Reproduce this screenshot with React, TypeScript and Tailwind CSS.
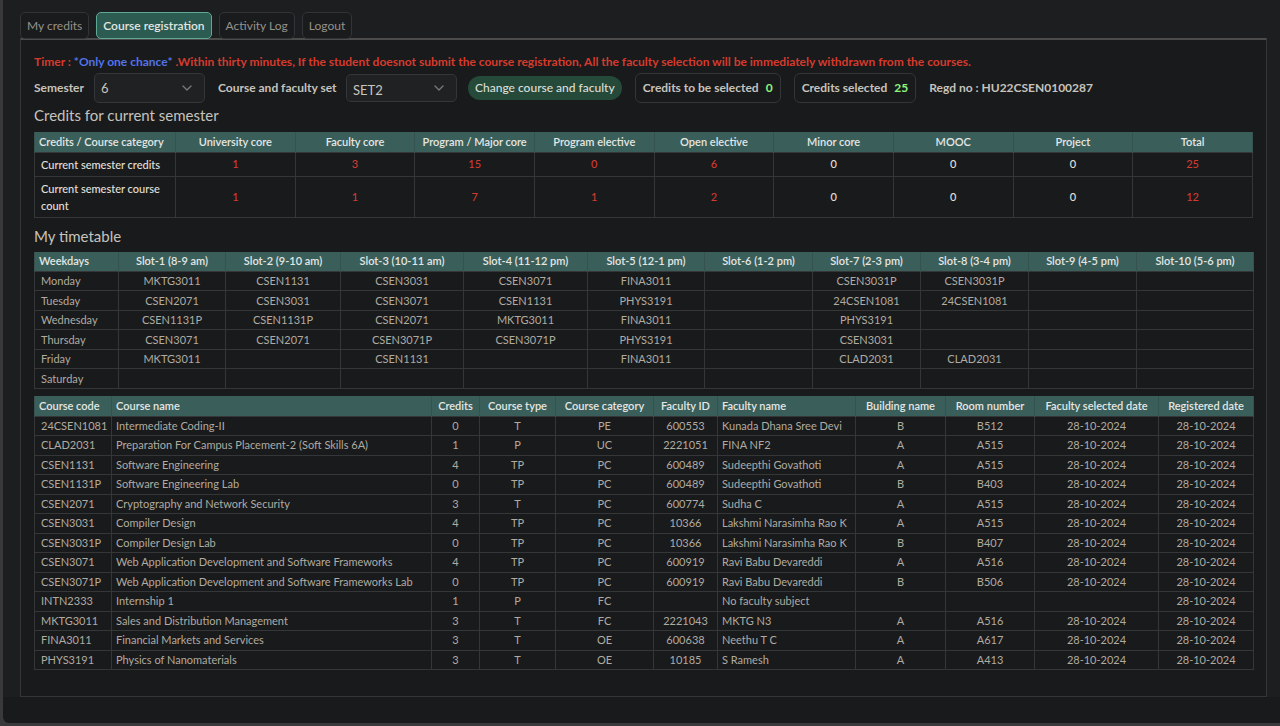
import { useState } from "react";
import type { ReactNode } from "react";
import { ChevronDown } from "lucide-react";

type Align = "left" | "center";

const tabs = ["My credits", "Course registration", "Activity Log", "Logout"];

const creditColumns = [
  "University core",
  "Faculty core",
  "Program / Major core",
  "Program elective",
  "Open elective",
  "Minor core",
  "MOOC",
  "Project",
  "Total",
];

const creditRows = [
  { label: "Current semester credits", height: "h-6", values: [1, 3, 15, 0, 6, 0, 0, 0, 25] },
  { label: "Current semester course count", height: "h-[41px]", values: [1, 1, 7, 1, 2, 0, 0, 0, 12] },
];

const slots = [
  { name: "Weekdays", width: "w-[84px]" },
  { name: "Slot-1 (8-9 am)", width: "w-[107px]" },
  { name: "Slot-2 (9-10 am)", width: "w-[115px]" },
  { name: "Slot-3 (10-11 am)", width: "w-[123px]" },
  { name: "Slot-4 (11-12 pm)", width: "w-[124px]" },
  { name: "Slot-5 (12-1 pm)", width: "w-[117px]" },
  { name: "Slot-6 (1-2 pm)", width: "w-[108px]" },
  { name: "Slot-7 (2-3 pm)", width: "w-[108px]" },
  { name: "Slot-8 (3-4 pm)", width: "w-[108px]" },
  { name: "Slot-9 (4-5 pm)", width: "w-[108px]" },
  { name: "Slot-10 (5-6 pm)", width: "w-[117px]" },
];

const timetable = [
  ["Monday", "MKTG3011", "CSEN1131", "CSEN3031", "CSEN3071", "FINA3011", "", "CSEN3031P", "CSEN3031P", "", ""],
  ["Tuesday", "CSEN2071", "CSEN3031", "CSEN3071", "CSEN1131", "PHYS3191", "", "24CSEN1081", "24CSEN1081", "", ""],
  ["Wednesday", "CSEN1131P", "CSEN1131P", "CSEN2071", "MKTG3011", "FINA3011", "", "PHYS3191", "", "", ""],
  ["Thursday", "CSEN3071", "CSEN2071", "CSEN3071P", "CSEN3071P", "PHYS3191", "", "CSEN3031", "", "", ""],
  ["Friday", "MKTG3011", "", "CSEN1131", "", "FINA3011", "", "CLAD2031", "CLAD2031", "", ""],
  ["Saturday", "", "", "", "", "", "", "", "", "", ""],
];

const courseColumns: { name: string; width: string; align: Align }[] = [
  { name: "Course code", width: "w-[77px]", align: "left" },
  { name: "Course name", width: "w-[320px]", align: "left" },
  { name: "Credits", width: "w-[48px]", align: "center" },
  { name: "Course type", width: "w-[76px]", align: "center" },
  { name: "Course category", width: "w-[98px]", align: "center" },
  { name: "Faculty ID", width: "w-[64px]", align: "center" },
  { name: "Faculty name", width: "w-[138px]", align: "left" },
  { name: "Building name", width: "w-[90px]", align: "center" },
  { name: "Room number", width: "w-[89px]", align: "center" },
  { name: "Faculty selected date", width: "w-[124px]", align: "center" },
  { name: "Registered date", width: "w-[95px]", align: "center" },
];

const date = "28-10-2024";

const courses = [
  ["24CSEN1081", "Intermediate Coding-II", "0", "T", "PE", "600553", "Kunada Dhana Sree Devi", "B", "B512", date, date],
  ["CLAD2031", "Preparation For Campus Placement-2 (Soft Skills 6A)", "1", "P", "UC", "2221051", "FINA NF2", "A", "A515", date, date],
  ["CSEN1131", "Software Engineering", "4", "TP", "PC", "600489", "Sudeepthi Govathoti", "A", "A515", date, date],
  ["CSEN1131P", "Software Engineering Lab", "0", "TP", "PC", "600489", "Sudeepthi Govathoti", "B", "B403", date, date],
  ["CSEN2071", "Cryptography and Network Security", "3", "T", "PC", "600774", "Sudha C", "A", "A515", date, date],
  ["CSEN3031", "Compiler Design", "4", "TP", "PC", "10366", "Lakshmi Narasimha Rao K", "A", "A515", date, date],
  ["CSEN3031P", "Compiler Design Lab", "0", "TP", "PC", "10366", "Lakshmi Narasimha Rao K", "B", "B407", date, date],
  ["CSEN3071", "Web Application Development and Software Frameworks", "4", "TP", "PC", "600919", "Ravi Babu Devareddi", "A", "A516", date, date],
  ["CSEN3071P", "Web Application Development and Software Frameworks Lab", "0", "TP", "PC", "600919", "Ravi Babu Devareddi", "B", "B506", date, date],
  ["INTN2333", "Internship 1", "1", "P", "FC", "", "No faculty subject", "", "", "", date],
  ["MKTG3011", "Sales and Distribution Management", "3", "T", "FC", "2221043", "MKTG N3", "A", "A516", date, date],
  ["FINA3011", "Financial Markets and Services", "3", "T", "OE", "600638", "Neethu T C", "A", "A617", date, date],
  ["PHYS3191", "Physics of Nanomaterials", "3", "T", "OE", "10185", "S Ramesh", "A", "A413", date, date],
];

function HeadCell({ children, width = "", align = "center" }: { children: ReactNode; width?: string; align?: Align }) {
  return (
    <th
      scope="col"
      className={`border-x border-[#35524f] p-0 px-1 text-[11px] leading-4 font-semibold whitespace-nowrap text-[#e4e6e3] ${
        align === "left" ? "text-left" : "text-center"
      } ${width}`}
    >
      {children}
    </th>
  );
}

function Cell({ children, align = "center", inset = "px-1" }: { children: ReactNode; align?: Align; inset?: string }) {
  return (
    <td
      className={`border border-[#343638] py-0 text-[11px] leading-4 whitespace-nowrap text-[#b0aba1] ${inset} ${
        align === "left" ? "text-left" : "text-center"
      }`}
    >
      {children}
    </td>
  );
}

function SelectBox({ id, options, size }: { id: string; options: string[]; size: string }) {
  return (
    <span className="relative w-[111px] shrink-0">
      <select
        id={id}
        className={`block w-full appearance-none rounded-[5px] border border-[#34373a] bg-[#1f2123] px-1.5 text-[13px] font-normal text-[#c9c5be] outline-none ${size}`}
      >
        {options.map((o) => (
          <option key={o}>{o}</option>
        ))}
      </select>
      <ChevronDown
        aria-hidden
        size={16}
        strokeWidth={2}
        className="pointer-events-none absolute top-1/2 right-2.5 -translate-y-1/2 text-[#77787a]"
      />
    </span>
  );
}

function Counter({ label, value }: { label: string; value: number }) {
  return (
    <div className="flex h-[30px] shrink-0 items-center gap-[7px] rounded-md border border-[#333538] px-[7px]">
      <span>{label}</span>
      <span className="text-[#8df57a]">{value}</span>
    </div>
  );
}

export default function App() {
  const [active, setActive] = useState("Course registration");

  return (
    <div className="flex min-h-screen flex-col bg-[#39393b] pb-[3px] pl-[3px] font-['Lato',sans-serif]">
      <div className="flex flex-1 flex-col rounded-bl-md bg-[#191a1c]">
        <main className="bg-[#1d1e20] pt-3 pr-[13px] pl-[17px]">
          <nav className="flex gap-[7px]">
            {tabs.map((t) => (
              <button
                key={t}
                type="button"
                onClick={() => setActive(t)}
                className={`h-[27px] rounded-[5px] border px-1.5 text-xs leading-4 ${
                  t === active
                    ? "border-[#5fa893] bg-[#2b5b51] font-semibold text-[#e2e5e0]"
                    : "border-[#323437] bg-[#1a1b1d] text-[#96928a]"
                }`}
              >
                {t}
              </button>
            ))}
          </nav>

          <section className="-mt-px border border-t-2 border-[#333537] border-t-[#4b4c4b] bg-[#191a1c] px-[13px] pt-3.5 pb-[26px]">
            <p className="text-xs leading-4 font-bold whitespace-nowrap text-[#d63a2c]">
              Timer : <span className="text-[#5273e8]">*Only one chance*</span> .Within thirty minutes, If the student
              doesnot submit the course registration, All the faculty selection will be immediately withdrawn from the
              courses.
            </p>

            <div className="mt-[3px] flex items-center text-xs leading-4 font-bold whitespace-nowrap text-[#c6c3bd]">
              <label htmlFor="semester" className="w-[60px] shrink-0">
                Semester
              </label>
              <SelectBox id="semester" options={["6"]} size="h-[30px]" />
              <label htmlFor="faculty-set" className="ml-[13px] w-[128px] shrink-0">
                Course and faculty set
              </label>
              <SelectBox id="faculty-set" options={["SET2"]} size="h-7 pt-1" />
              <button
                type="button"
                className="ml-[11px] h-6 shrink-0 rounded-full bg-[#264a3a] px-[7px] font-medium text-[#dcdfd9]"
              >
                Change course and faculty
              </button>
              <div className="ml-[13px] flex items-center gap-[13px]">
                <Counter label="Credits to be selected" value={0} />
                <Counter label="Credits selected" value={25} />
                <span>Regd no : HU22CSEN0100287</span>
              </div>
            </div>

            <h2 className="mt-0.5 text-[15px] leading-5 text-[#c6c3bd]">Credits for current semester</h2>
            <table className="mt-[7px] w-full table-fixed border-collapse">
              <thead>
                <tr className="h-5 bg-[#3a5f5b]">
                  <HeadCell width="w-[141px]" align="left">
                    Credits / Course category
                  </HeadCell>
                  {creditColumns.map((c) => (
                    <HeadCell key={c}>{c}</HeadCell>
                  ))}
                </tr>
              </thead>
              <tbody>
                {creditRows.map((r) => (
                  <tr key={r.label} className={r.height}>
                    <th
                      scope="row"
                      className="border border-[#343638] px-1.5 py-0 text-left text-[11px] leading-[17px] font-medium text-[#e2e0dc]"
                    >
                      {r.label}
                    </th>
                    {r.values.map((v, i) => (
                      <td
                        key={creditColumns[i]}
                        className={`border border-[#343638] p-0 text-center text-[11px] leading-4 font-medium ${
                          i > 4 && i < 8 ? "text-[#e2e0dc]" : "text-[#d33a30]"
                        }`}
                      >
                        {v}
                      </td>
                    ))}
                  </tr>
                ))}
              </tbody>
            </table>

            <h2 className="mt-2 text-[15px] leading-5 text-[#c6c3bd]">My timetable</h2>
            <table className="mt-1.5 w-full table-fixed border-collapse">
              <thead>
                <tr className="h-5 bg-[#3a5f5b]">
                  {slots.map((s, i) => (
                    <HeadCell key={s.name} width={s.width} align={i === 0 ? "left" : "center"}>
                      {s.name}
                    </HeadCell>
                  ))}
                </tr>
              </thead>
              <tbody>
                {timetable.map((r) => (
                  <tr key={r[0]} className="odd:h-[19px] even:h-5">
                    {r.map((c, i) => (
                      <Cell key={slots[i].name} align={i === 0 ? "left" : "center"} inset={i === 0 ? "px-1.5" : "px-1"}>
                        {c}
                      </Cell>
                    ))}
                  </tr>
                ))}
              </tbody>
            </table>

            <table className="mt-[7px] w-full table-fixed border-collapse">
              <thead>
                <tr className="h-5 bg-[#3a5f5b]">
                  {courseColumns.map((c) => (
                    <HeadCell key={c.name} width={c.width} align={c.align}>
                      {c.name}
                    </HeadCell>
                  ))}
                </tr>
              </thead>
              <tbody>
                {courses.map((r) => (
                  <tr key={r[0]} className="odd:h-[19px] even:h-5">
                    {r.map((c, i) => (
                      <Cell key={courseColumns[i].name} align={courseColumns[i].align} inset={i === 0 ? "px-1.5" : "px-1"}>
                        {c}
                      </Cell>
                    ))}
                  </tr>
                ))}
              </tbody>
            </table>
          </section>
        </main>
      </div>
    </div>
  );
}
